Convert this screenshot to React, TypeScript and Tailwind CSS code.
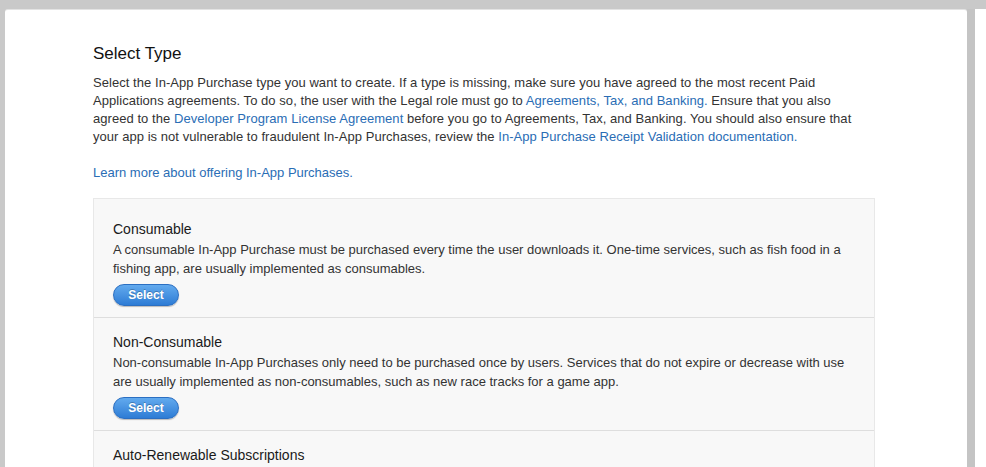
import React from 'react';

type PurchaseType = {
  name: string;
  description?: string;
};

const types: PurchaseType[] = [
  {
    name: 'Consumable',
    description:
      'A consumable In-App Purchase must be purchased every time the user downloads it. One-time services, such as fish food in a fishing app, are usually implemented as consumables.',
  },
  {
    name: 'Non-Consumable',
    description:
      'Non-consumable In-App Purchases only need to be purchased once by users. Services that do not expire or decrease with use are usually implemented as non-consumables, such as new race tracks for a game app.',
  },
  // only the title is in view, the rest falls below the fold
  { name: 'Auto-Renewable Subscriptions' },
];

function Link({ children }: { children: React.ReactNode }) {
  return <a href="#" className="text-[#2a6db5] hover:underline">{children}</a>;
}

function SelectButton() {
  return (
    <button
      type="button"
      className="h-[22px] w-[66px] rounded-full border border-[#2b6fc2] bg-gradient-to-b from-[#62aaee] to-[#2d7cd5] text-[12px] font-bold leading-none text-white shadow-[0_1px_1px_rgba(0,0,0,0.25)] [text-shadow:0_-1px_0_rgba(0,0,0,0.25)]"
    >
      Select
    </button>
  );
}

export default function App() {
  return (
    <div
      className="flex h-[467px] w-[986px] overflow-hidden bg-[#c9c9c9] pt-[9px] text-[#333]"
      style={{ fontFamily: '"Liberation Sans", Arial, sans-serif' }}
    >
      <div className="w-[5px] shrink-0" />
      <div className="flex-1 rounded-tl-[3px] rounded-tr-[3px] border-t border-[#e3e3e3] bg-white pl-[88px] pt-[33px]">
        <div className="w-[782px]">
          <h1 className="text-[17px] leading-[22px] text-[#111]">Select Type</h1>
          <p className="mt-[9px] text-[13px] leading-[18px] tracking-[0.05px]">
            Select the In-App Purchase type you want to create. If a type is missing, make sure you have agreed to the most recent Paid
            <br />
            Applications agreements. To do so, the user with the Legal role must go to <Link>Agreements, Tax, and Banking.</Link> Ensure that you also
            <br />
            agreed to the <Link>Developer Program License Agreement</Link> before you go to Agreements, Tax, and Banking. You should also ensure that
            <br />
            your app is not vulnerable to fraudulent In-App Purchases, review the <Link>In-App Purchase Receipt Validation documentation.</Link>
          </p>
          <p className="mt-[18px] text-[13px] leading-[18px]">
            <Link>Learn more about offering In-App Purchases.</Link>
          </p>

          <div className="mt-[16px] border border-[#e8e8e8] bg-[#f8f8f8] pt-[6px]">
            {types.map((t, i) => (
              <div
                key={t.name}
                className={`px-[19px] pb-[11px] pt-[14px] ${i < types.length - 1 ? 'border-b border-[#dedede]' : ''}`}
              >
                <h2 className="text-[14px] leading-[20px] text-[#1a1a1a]">{t.name}</h2>
                {t.description && (
                  <>
                    <p className="mt-[1px] text-[13px] leading-[19px]">{t.description}</p>
                    <div className="mt-[6px] flex">
                      <SelectButton />
                    </div>
                  </>
                )}
              </div>
            ))}
          </div>
        </div>
      </div>
      <div className="w-[8px] shrink-0 bg-[#c4c4c4]" />
      <div className="w-[11px] shrink-0 bg-white" />
    </div>
  );
}
